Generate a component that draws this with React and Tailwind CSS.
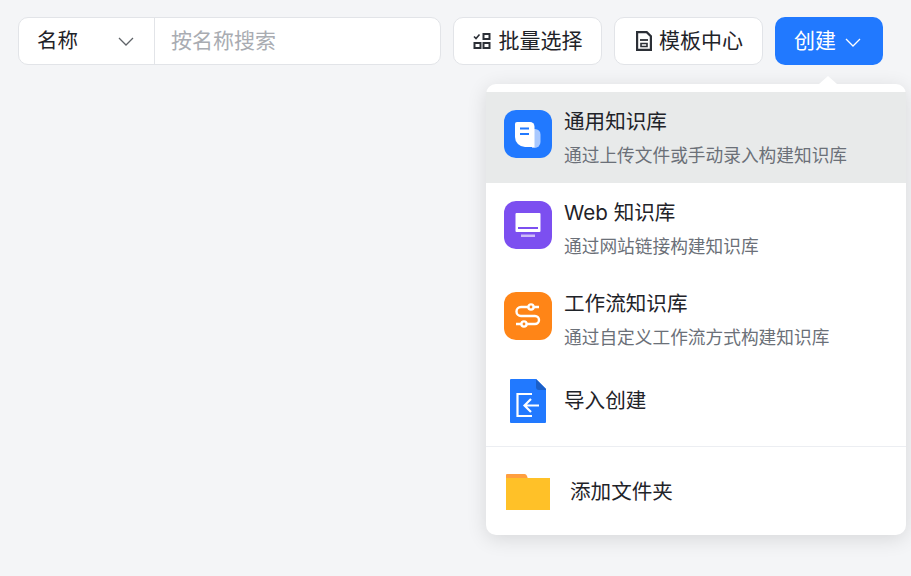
import React from 'react'

const FONT = 'font-["Inter","Noto_Sans_CJK_SC",sans-serif]'

function Chevron({ className }) {
  return (
    <svg viewBox="0 0 16 9" fill="none" stroke="currentColor" strokeWidth="1.3" className={className}>
      <path d="M1 1 8 8 15 1" />
    </svg>
  )
}

function BatchIcon() {
  return (
    <svg viewBox="0 0 18 18" fill="none" stroke="#2b2f36" strokeWidth="2" className="w-[18px] h-[18px]">
      <path d="M1 4.5 3 6.5 6.5 2.5" strokeWidth="1.6" />
      <rect x="10.5" y="2" width="6" height="5" />
      <rect x="1.5" y="11" width="6" height="5" />
      <rect x="10.5" y="11" width="6" height="5" />
    </svg>
  )
}

function TemplateIcon() {
  return (
    <svg viewBox="0 0 16 20" fill="none" stroke="#2b2f36" strokeWidth="2.2" className="w-[16px] h-[20px]">
      <path d="M1.1 1.1h9.6l4.2 4.2v13.6H1.1z" />
      <path d="M4 9h8" strokeWidth="1.8" />
      <path d="M5 12.5h6v3H5z" strokeWidth="1.6" />
    </svg>
  )
}

function DocBadge() {
  return (
    <svg viewBox="0 0 48 48" className="w-12 h-12 shrink-0">
      <rect width="48" height="48" rx="12" fill="#2179ff" />
      <path d="M29 19h2a5.500 5.500 0 0 1 5.500 5.500V32a6 6 0 0 1-6 6H28z" fill="#a9c9ff" />
      <path d="M11 14a2 2 0 0 1 2-2h13a4.500 4.500 0 0 1 4.500 4.500V37H21a10 10 0 0 1-10-10z" fill="#fff" />
      <path d="M16 18.500h9M16 24h9" stroke="#2179ff" strokeWidth="2" />
    </svg>
  )
}

function WebBadge() {
  return (
    <svg viewBox="0 0 48 48" className="w-12 h-12 shrink-0">
      <rect width="48" height="48" rx="12" fill="#7c4ff0" />
      <rect x="11.500" y="12" width="25" height="19" rx="1" fill="#fff" />
      <path d="M14 27h20" stroke="#7c4ff0" strokeWidth="2" />
      <rect x="17" y="33.500" width="14" height="2.500" fill="#cdbcf8" />
    </svg>
  )
}

function FlowBadge() {
  return (
    <svg viewBox="0 0 48 48" className="w-12 h-12 shrink-0">
      <rect width="48" height="48" rx="12" fill="#ff8517" />
      <path d="M35 15H17a4.500 4.500 0 0 0 0 9h14a4 4 0 0 1 0 8H12" fill="none" stroke="#fff" strokeWidth="2.400" />
      <circle cx="27" cy="15" r="2.600" fill="#ff8517" stroke="#fff" strokeWidth="2.400" />
      <circle cx="20" cy="32" r="2.600" fill="#ff8517" stroke="#fff" strokeWidth="2.400" />
    </svg>
  )
}

function ImportIcon() {
  return (
    <svg viewBox="0 0 36 44" className="w-9 h-11 shrink-0">
      <path d="M1 0h25l10 10v33a1 1 0 0 1-1 1H1a1 1 0 0 1-1-1V1a1 1 0 0 1 1-1z" fill="#2179ff" />
      <path d="M26 0l10 10v1H29a3 3 0 0 1-3-3z" fill="#1a5fc8" />
      <path d="M22 15H7.500v22H22" fill="none" stroke="#fff" strokeWidth="2.200" />
      <path d="M29 26.500H15M21 20 14.500 26.500 21 33" fill="none" stroke="#fff" strokeWidth="2.200" />
    </svg>
  )
}

function FolderIcon() {
  return (
    <svg viewBox="0 0 44 36" className="w-11 h-9 shrink-0">
      <path d="M0 1a1 1 0 0 1 1-1h17a3 3 0 0 1 3 2l1 3H0z" fill="#ff9f3f" />
      <rect y="4" width="44" height="32" fill="#ffc128" />
    </svg>
  )
}

function MenuItem({ icon, title, desc, active }) {
  return (
    <div className={`flex items-start gap-3 h-[91px] px-[18px] pt-[18px] ${active ? 'bg-[#e8eaea]' : ''}`}>
      {icon}
      <div className="-mt-[2px]">
        <div className="text-[20.6px] leading-[28px] text-[#1f2329]">{title}</div>
        <div className="mt-[8px] text-[17.7px] leading-[24px] text-[#6b7078]">{desc}</div>
      </div>
    </div>
  )
}

export default function App() {
  return (
    <div className={`relative h-[576px] w-[911px] overflow-hidden bg-[#f4f5f7] ${FONT}`}>
      <div className="flex items-center gap-3 pl-[18px] pt-[17px]">
        <div className="flex h-[48px] w-[423px] rounded-[10px] border border-[#e2e4e8] bg-white">
          <div className="flex w-[136px] items-center justify-between border-r border-[#e2e4e8] pl-[18px] pr-[20px] pt-[1px] text-[20.5px] text-[#1f2329]">
            <span>名称</span>
            <Chevron className="w-[16px] h-[9px] text-[#5f6368]" />
          </div>
          <div className="flex flex-1 items-center pl-4 text-[21px] text-[#a9acb2]">按名称搜索</div>
        </div>
        <button className="flex h-[48px] w-[149px] items-center justify-center gap-2 rounded-[10px] border border-[#e2e4e8] bg-white text-[21px] text-[#1f2329]">
          <BatchIcon />
          <span>批量选择</span>
        </button>
        <button className="flex h-[48px] w-[149px] items-center justify-center gap-[7px] rounded-[10px] border border-[#e2e4e8] bg-white pl-[2px] text-[21px] text-[#1f2329]">
          <TemplateIcon />
          <span>模板中心</span>
        </button>
        <button className="flex h-[48px] w-[108px] items-center justify-center gap-[9px] rounded-[10px] bg-[#2179ff] pr-[3px] text-[21px] text-white">
          <span>创建</span>
          <Chevron className="mt-[2px] w-[16px] h-[9px] text-white" />
        </button>
      </div>

      <div className="absolute left-[486px] top-[84px] w-[420px] rounded-[10px] bg-white pt-2 shadow-[0_4px_20px_rgba(0,0,0,0.12)]">
        <div className="absolute -top-[8px] left-[333px] h-0 w-0 border-x-[9px] border-b-[8px] border-x-transparent border-b-white" />
        <MenuItem active icon={<DocBadge />} title="通用知识库" desc="通过上传文件或手动录入构建知识库" />
        <MenuItem icon={<WebBadge />} title="Web 知识库" desc="通过网站链接构建知识库" />
        <MenuItem icon={<FlowBadge />} title="工作流知识库" desc="通过自定义工作流方式构建知识库" />
        <div className="flex h-[72px] items-center gap-[18px] pl-6 pr-[18px] text-[20.6px] text-[#1f2329]">
          <ImportIcon />
          <span className="pt-[1px]">导入创建</span>
        </div>
        <div className="mt-[9px] border-t border-[#eceef2]" />
        <div className="flex h-[88px] items-center gap-[20px] pl-5 pt-[2px] text-[20.6px] text-[#1f2329]">
          <FolderIcon />
          <span className="pt-[1px]">添加文件夹</span>
        </div>
      </div>
    </div>
  )
}
